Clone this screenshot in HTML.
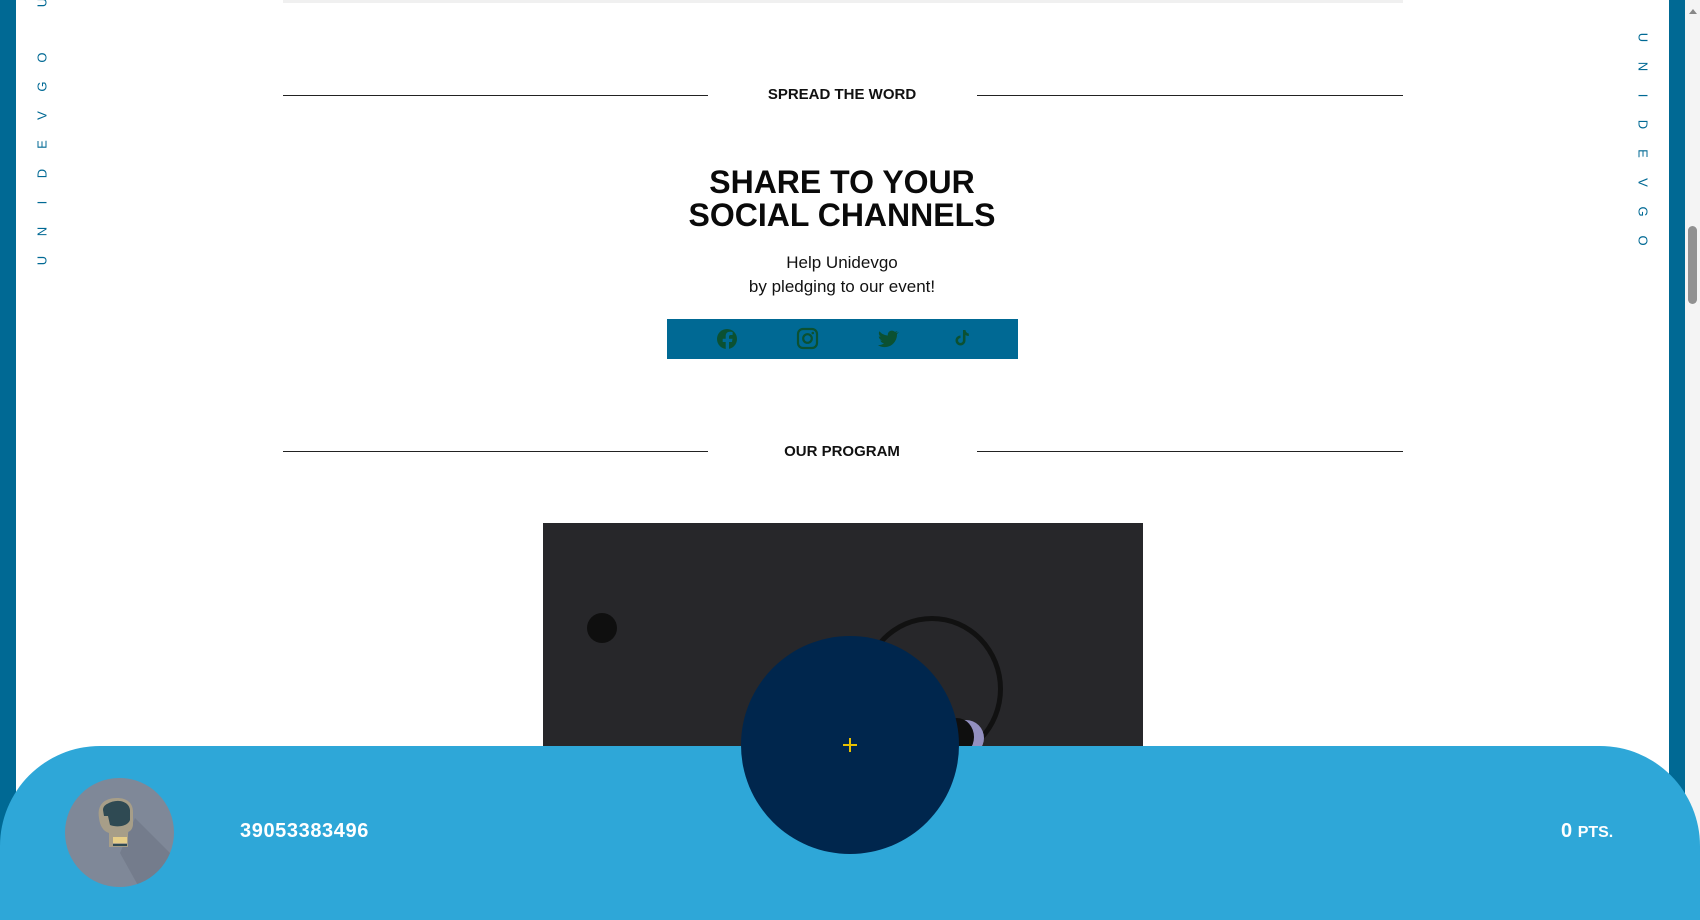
<!DOCTYPE html>
<html><head><meta charset="utf-8"><style>
*{margin:0;padding:0;box-sizing:border-box}
html,body{width:1700px;height:920px;overflow:hidden;background:#fff;font-family:"Liberation Sans",sans-serif;position:relative}
.abs{position:absolute}
.line{position:absolute;height:1px;background:#222}
.h{position:absolute;width:1700px;text-align:center;font-weight:bold;color:#111}
</style></head><body>
<div class="abs" style="left:0;top:0;width:16px;height:920px;background:#006994"></div>
<div class="abs" style="left:1669px;top:0;width:16px;height:920px;background:#006994"></div>
<div class="abs" style="left:1685px;top:0;width:15px;height:920px;background:#f4f4f4"></div>
<div class="abs" style="left:1688px;top:226px;width:9px;height:78px;background:#919191;border-radius:5px"></div>
<div class="abs" style="left:1689px;top:9px;width:0;height:0;border-left:4px solid transparent;border-right:4px solid transparent;border-bottom:5px solid #888"></div>
<div class="abs" style="left:283px;top:0;width:1120px;height:3px;background:#f0f0f0"></div>

<div class="abs" style="left:32px;top:-12px;width:20px;color:#006994;font-size:13px;line-height:29px;text-align:center"><div style="transform:rotate(-90deg)">U</div></div>
<div class="abs" style="left:32px;top:43px;width:20px;color:#006994;font-size:13px;line-height:29px;text-align:center">
<div style="transform:rotate(-90deg)">O</div><div style="transform:rotate(-90deg)">G</div><div style="transform:rotate(-90deg)">V</div><div style="transform:rotate(-90deg)">E</div><div style="transform:rotate(-90deg)">D</div><div style="transform:rotate(-90deg)">I</div><div style="transform:rotate(-90deg)">N</div><div style="transform:rotate(-90deg)">U</div></div>
<div class="abs" style="left:1633px;top:23px;width:20px;color:#006994;font-size:13px;line-height:29px;text-align:center">
<div style="transform:rotate(90deg)">U</div><div style="transform:rotate(90deg)">N</div><div style="transform:rotate(90deg)">I</div><div style="transform:rotate(90deg)">D</div><div style="transform:rotate(90deg)">E</div><div style="transform:rotate(90deg)">V</div><div style="transform:rotate(90deg)">G</div><div style="transform:rotate(90deg)">O</div></div>

<div class="line" style="left:283px;width:425px;top:95px"></div>
<div class="line" style="left:977px;width:426px;top:95px"></div>
<div class="h" style="left:-8px;top:86px;font-size:15px">SPREAD THE WORD</div>
<div class="h" style="left:-8px;top:166px;font-size:32px;line-height:33px;color:#0a0a0a">SHARE TO YOUR<br>SOCIAL CHANNELS</div>
<div class="abs" style="left:-8px;width:1700px;text-align:center;top:251px;font-size:17px;line-height:24px;color:#111">Help Unidevgo<br>by pledging to our event!</div>
<div class="abs" style="left:667px;top:319px;width:351px;height:40px;background:#006994"></div>
<svg class="abs" style="left:667px;top:319px" width="351" height="40" viewBox="0 0 351 40">
<g fill="#0b5132">
<circle cx="60" cy="20" r="10"/>
<path d="M62 31v-8h3l.5-3.3H62v-2c0-1 .4-1.7 1.8-1.7h1.8v-3c-.5 0-1.5-.2-2.7-.2-2.6 0-4.2 1.5-4.2 4.4v2.5h-3V23h3v8z" fill="#006994"/>
<rect x="131" y="10" width="19" height="19" rx="5" fill="none" stroke="#0b5132" stroke-width="2.2"/>
<circle cx="140.5" cy="19.5" r="4.3" fill="none" stroke="#0b5132" stroke-width="2.2"/>
<circle cx="145.8" cy="14" r="1.3"/>
<path d="M231 13.5c-.7.3-1.5.5-2.3.6.8-.5 1.5-1.3 1.8-2.2-.8.5-1.7.8-2.6 1-1.6-1.7-4.4-1.7-6 0-.9.9-1.3 2.3-1 3.6-3.3-.2-6.4-1.7-8.5-4.3-1.1 1.9-.5 4.3 1.3 5.5-.7 0-1.3-.2-1.9-.5 0 2 1.4 3.7 3.4 4.1-.6.2-1.300.2-1.9.1.6 1.7 2.1 2.9 3.9 2.9-1.8 1.4-4.1 2-6.3 1.8 2 1.3 4.3 2 6.7 2 8 0 12.4-6.7 12.4-12.5v-.6c.8-.6 1.5-1.3 2-2.2z"/>
<path d="M296 11h2.5c.2 2 1.5 3.3 3.3 3.5v2.5c-1.3 0-2.4-.4-3.3-1v5.5c0 2.8-2.3 5-5 5s-5-2.2-5-5 2.3-5 5-5v2.6c-1.3 0-2.4 1-2.4 2.4s1.1 2.4 2.4 2.4 2.4-1 2.4-2.4z"/>
</g></svg>

<div class="line" style="left:283px;width:425px;top:451px"></div>
<div class="line" style="left:977px;width:426px;top:451px"></div>
<div class="h" style="left:-8px;top:443px;font-size:15px">OUR PROGRAM</div>

<div class="abs" style="left:543px;top:523px;width:600px;height:240px;background:#27272a;overflow:hidden">
<div class="abs" style="left:44px;top:90px;width:30px;height:30px;border-radius:50%;background:#0f0f0f"></div>
<div class="abs" style="left:318px;top:93px;width:142px;height:146px;border-radius:50%;border:5px solid #111"></div>
<div class="abs" style="left:405px;top:197px;width:36px;height:36px;border-radius:50%;background:#9390c0"></div>
<div class="abs" style="left:397px;top:195px;width:34px;height:38px;border-radius:50%;background:#0f0f0f"></div>
</div>

<div class="abs" style="left:0;top:746px;width:1700px;height:200px;background:#2ea7d8;border-radius:100px 100px 0 0"></div>
<div class="abs" style="left:741px;top:636px;width:218px;height:218px;border-radius:50%;background:#00264d"></div>
<div class="abs" style="left:843px;top:744px;width:14px;height:2px;background:#e8c000"></div>
<div class="abs" style="left:849px;top:738px;width:2px;height:14px;background:#e8c000"></div>

<div class="abs" style="left:65px;top:778px;width:109px;height:109px;border-radius:50%;background:#7f8898;overflow:hidden">
<svg width="109" height="109" viewBox="0 0 109 109">
<path d="M70 40L120 90 80 120 55 75z" fill="#6a7080" opacity=".5"/>
<path d="M34 40c-2-12 4-20 18-20 10 0 16 5 16 14v12c0 4-2 7-5 8v15H44V55c-6-2-9-7-10-15z" fill="#a79e88"/>
<path d="M42 26c10-6 22-3 23 6v10c-2 6-12 8-20 5l-2-9h-4l-1-6c0-3 2-5 4-6z" fill="#2f4a53"/>
<rect x="48" y="59" width="14" height="6" fill="#e6ce88"/>
<rect x="48" y="66" width="14" height="2" fill="#2f4a53"/>
</svg></div>
<div class="abs" style="left:240px;top:820px;font-size:20px;font-weight:bold;color:#fff;letter-spacing:0.6px">39053383496</div>
<div class="abs" style="left:1561px;top:820px;font-size:20px;font-weight:bold;color:#fff">0 <span style="font-size:16px">PTS.</span></div>
</body></html>
